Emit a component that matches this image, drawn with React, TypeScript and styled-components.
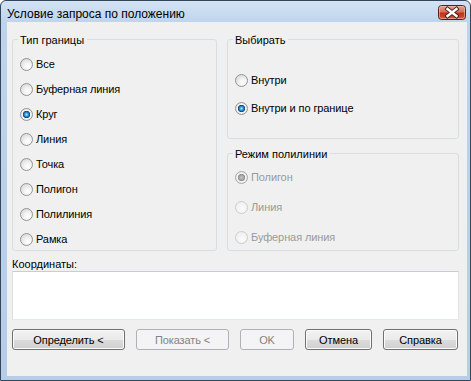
import React from "react";
import styled, { createGlobalStyle } from "styled-components";

const Global = createGlobalStyle`
  html, body { margin: 0; padding: 0; background: #ffffff; }
  body { font-family: "Liberation Sans", Arial, sans-serif; font-size: 11px; color: #000; }
  * { box-sizing: border-box; }
`;

const Window = styled.div`
  width: 471px;
  height: 381px;
  border: 1px solid #34465a;
  border-radius: 6px 6px 0 0;
  background: linear-gradient(#d3e3f4 0px, #bed4ec 22px, #b6cde8 100%);
  display: flex;
  flex-direction: column;
  padding: 0 3px 4px 6px;
  overflow: hidden;
`;

const TitleBar = styled.div`
  height: 21px;
  flex: none;
  display: flex;
  align-items: flex-start;
  justify-content: space-between;
`;

const TitleText = styled.div`
  font-family: "Liberation Sans", Arial, sans-serif;
  font-size: 12px;
  line-height: 14px;
  padding-top: 6px;
  color: #000;
`;

const CloseIcon = styled.svg`
  display: block;
  flex: none;
  margin-top: 4px;
  margin-right: 1px;
`;

const Client = styled.div`
  flex: 1;
  background: #f0f0f0;
  display: flex;
  flex-direction: column;
  padding: 17px 8px 0 5px;
`;

const TopRow = styled.div`
  display: grid;
  grid-template-columns: 205px 1fr;
  column-gap: 10px;
`;

const RightColumn = styled.div`
  display: flex;
  flex-direction: column;
  gap: 14px;
`;

const GroupBox = styled.div<{ $h: number }>`
  height: ${(p) => p.$h}px;
  border: 1px solid #d5dfe5;
  border-radius: 3px;
  display: flex;
  flex-direction: column;
`;

const Legend = styled.div`
  align-self: flex-start;
  margin: -7px 0 0 5px;
  padding: 0 3px 0 2px;
  line-height: 14px;
  background: #f0f0f0;
  color: #000;
`;

const OptionList = styled.div<{ $top: number; $gap: number }>`
  display: flex;
  flex-direction: column;
  padding: ${(p) => p.$top}px 0 0 7px;
  gap: ${(p) => p.$gap}px;
`;

const OptionRow = styled.label<{ $disabled?: boolean }>`
  display: flex;
  align-items: center;
  gap: 3px;
  height: 14px;
  line-height: 14px;
  letter-spacing: -0.1px;
  color: ${(p) => (p.$disabled ? "#9a9a9a" : "#000")};
`;

const normalBg =
  "radial-gradient(circle at 62% 68%, #ffffff 0%, #f3f3f3 35%, #dcdcdc 75%, #cbcbcb 100%)";
const checkedBg =
  "radial-gradient(circle at 50% 50%, #b9efff 0px, #4fb3ea 1.2px, #1a6fb4 2.6px, #0c3f74 3.4px, #f6f6f6 3.9px, #e6e6e6 5.5px)";
const disabledBg = "radial-gradient(circle at 60% 65%, #fbfbfb 0%, #f0f0f0 70%, #e8e8e8 100%)";
const checkedDisabledBg =
  "radial-gradient(circle at 50% 50%, #c9c9c9 0px, #a9a9a9 2px, #8d8d8d 3.4px, #f6f6f6 3.9px, #e9e9e9 5.5px)";

const RadioDot = styled.span<{ $checked?: boolean; $disabled?: boolean }>`
  width: 13px;
  height: 13px;
  flex: none;
  border-radius: 50%;
  border: 1px solid ${(p) => (p.$disabled ? (p.$checked ? "#a8a8a8" : "#cdcdcd") : "#929496")};
  background: ${(p) =>
    p.$checked ? (p.$disabled ? checkedDisabledBg : checkedBg) : p.$disabled ? disabledBg : normalBg};
`;

const CoordLabel = styled.div`
  margin-top: 7px;
  line-height: 13px;
`;

const CoordBox = styled.div`
  height: 49px;
  background: #ffffff;
  border: 1px solid;
  border-color: #c9ccd2 #e2e3ea #e3e9ef #dbdfe6;
`;

const ButtonRow = styled.div`
  display: flex;
  gap: 11px;
  margin-top: 9px;
`;

const Button = styled.button<{ $w: number }>`
  width: ${(p) => p.$w}px;
  height: 21px;
  padding: 0;
  border: 1px solid ${(p) => (p.disabled ? "#adb2b5" : "#707070")};
  border-radius: 3px;
  font-family: "Liberation Sans", Arial, sans-serif;
  font-size: 11px;
  letter-spacing: -0.1px;
  color: ${(p) => (p.disabled ? "#838383" : "#000")};
  background: ${(p) =>
    p.disabled
      ? "#f4f4f4"
      : "linear-gradient(#f2f2f2 0%, #ebebeb 50%, #dddddd 50%, #cfcfcf 100%)"};
  box-shadow: ${(p) => (p.disabled ? "none" : "inset 0 0 0 1px #fcfcfc")};
`;

type Opt = { label: string; checked?: boolean; disabled?: boolean };

const Options = ({ items, top, gap }: { items: Opt[]; top: number; gap: number }) => (
  <OptionList $top={top} $gap={gap}>
    {items.map((o) => (
      <OptionRow key={o.label} $disabled={o.disabled}>
        <RadioDot $checked={o.checked} $disabled={o.disabled} />
        {o.label}
      </OptionRow>
    ))}
  </OptionList>
);

const CloseGlyph = () => (
  <CloseIcon width="28" height="15" viewBox="0 0 28 15">
    <defs>
      <linearGradient id="closeRed" x1="0" y1="0" x2="0" y2="1">
        <stop offset="0" stopColor="#e8a592" />
        <stop offset="0.45" stopColor="#d7705a" />
        <stop offset="0.55" stopColor="#bc3119" />
        <stop offset="1" stopColor="#d25a3e" />
      </linearGradient>
    </defs>
    <rect x="0.5" y="0.5" width="27" height="14" rx="3" fill="url(#closeRed)" stroke="#5a1f1a" />
    <rect x="1.5" y="1.5" width="25" height="12" rx="2" fill="none" stroke="#f3c2b6" strokeOpacity="0.6" />
    <path d="M9.5 4 L18.5 11 M18.5 4 L9.5 11" stroke="#4a1c18" strokeWidth="4.2" strokeLinecap="square" />
    <path d="M9.5 4 L18.5 11 M18.5 4 L9.5 11" stroke="#ffffff" strokeWidth="2.4" strokeLinecap="square" />
  </CloseIcon>
);

export default function App() {
  return (
    <>
      <Global />
      <Window>
        <TitleBar>
          <TitleText>Условие запроса по положению</TitleText>
          <CloseGlyph />
        </TitleBar>
        <Client>
          <TopRow>
            <GroupBox $h={212}>
              <Legend>Тип границы</Legend>
              <Options
                top={10}
                gap={11}
                items={[
                  { label: "Все" },
                  { label: "Буферная линия" },
                  { label: "Круг", checked: true },
                  { label: "Линия" },
                  { label: "Точка" },
                  { label: "Полигон" },
                  { label: "Полилиния" },
                  { label: "Рамка" },
                ]}
              />
            </GroupBox>
            <RightColumn>
              <GroupBox $h={100}>
                <Legend>Выбирать</Legend>
                <Options
                  top={26}
                  gap={14}
                  items={[{ label: "Внутри" }, { label: "Внутри и по границе", checked: true }]}
                />
              </GroupBox>
              <GroupBox $h={98}>
                <Legend>Режим полилинии</Legend>
                <Options
                  top={9}
                  gap={16}
                  items={[
                    { label: "Полигон", checked: true, disabled: true },
                    { label: "Линия", disabled: true },
                    { label: "Буферная линия", disabled: true },
                  ]}
                />
              </GroupBox>
            </RightColumn>
          </TopRow>
          <CoordLabel>Координаты:</CoordLabel>
          <CoordBox />
          <ButtonRow>
            <Button $w={113}>Определить &lt;</Button>
            <Button $w={93} disabled>
              Показать &lt;
            </Button>
            <Button $w={54} disabled>
              OK
            </Button>
            <Button $w={67}>Отмена</Button>
            <Button $w={75}>Справка</Button>
          </ButtonRow>
        </Client>
      </Window>
    </>
  );
}
